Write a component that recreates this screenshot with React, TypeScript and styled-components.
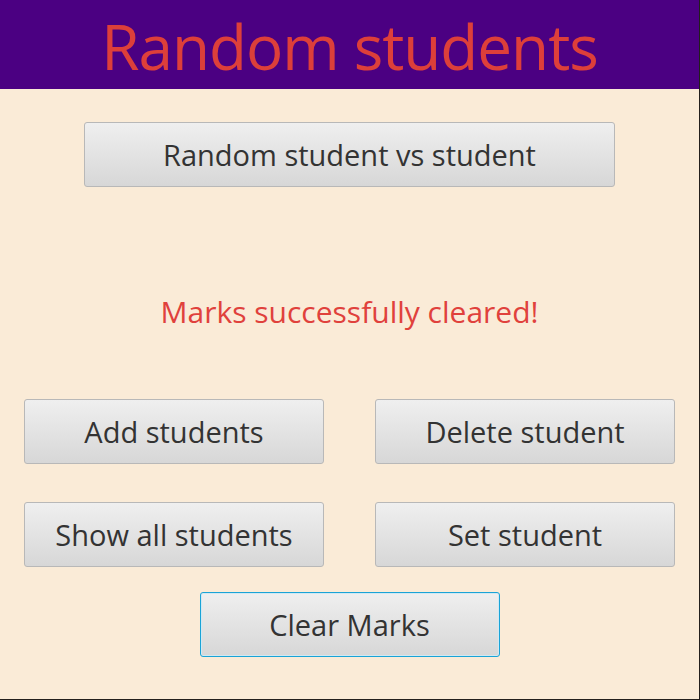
import React from "react";
import styled, { createGlobalStyle } from "styled-components";

const Global = createGlobalStyle`
  html, body { margin: 0; padding: 0; background: #faebd7; }
  * { box-sizing: border-box; }
`;

const Window = styled.div`
  width: 700px;
  height: 700px;
  background: #faebd7;
  border-right: 1px solid #231f1c;
  border-bottom: 1px solid #231f1c;
  display: flex;
  flex-direction: column;
  align-items: center;
  font-family: "Open Sans", "Noto Sans", sans-serif;
`;

const Header = styled.header`
  width: 100%;
  height: 89px;
  background: #4b0082;
  display: flex;
  align-items: center;
  justify-content: center;
`;

const Title = styled.h1`
  margin: 0;
  padding-top: 4px;
  font-weight: 400;
  font-size: 62px;
  line-height: 85px;
  color: #dd3f3a;
  letter-spacing: -1px;
`;

const Button = styled.button<{ $w: number; $focused?: boolean }>`
  width: ${(p) => p.$w}px;
  height: 65px;
  flex: none;
  border-radius: 3px;
  border: 1px solid ${(p) => (p.$focused ? "#1aa3d6" : "#b8b8b8")};
  box-shadow: ${(p) => (p.$focused ? "inset 0 0 0 1px #cfe9f4" : "none")};
  background: linear-gradient(#efefef, #d7d7d7);
  color: #333333;
  font-family: inherit;
  font-size: 29px;
  padding: 0;
  cursor: pointer;
`;

const Message = styled.p`
  margin: 0;
  height: 40px;
  line-height: 40px;
  font-size: 30px;
  color: #e0413c;
`;

const Row = styled.div`
  width: 100%;
  display: flex;
  justify-content: space-between;
  padding: 0 24px;
`;

const Gap = styled.div<{ $h: number }>`
  height: ${(p) => p.$h}px;
  flex: none;
`;

export default function App() {
  return (
    <>
      <Global />
      <Window>
        <Header>
          <Title>Random students</Title>
        </Header>
        <Gap $h={33} />
        <Button $w={531}>Random student vs student</Button>
        <Gap $h={105} />
        <Message>Marks successfully cleared!</Message>
        <Gap $h={67} />
        <Row>
          <Button $w={300}>Add students</Button>
          <Button $w={300}>Delete student</Button>
        </Row>
        <Gap $h={38} />
        <Row>
          <Button $w={300}>Show all students</Button>
          <Button $w={300}>Set student</Button>
        </Row>
        <Gap $h={25} />
        <Button $w={300} $focused>Clear Marks</Button>
      </Window>
    </>
  );
}
